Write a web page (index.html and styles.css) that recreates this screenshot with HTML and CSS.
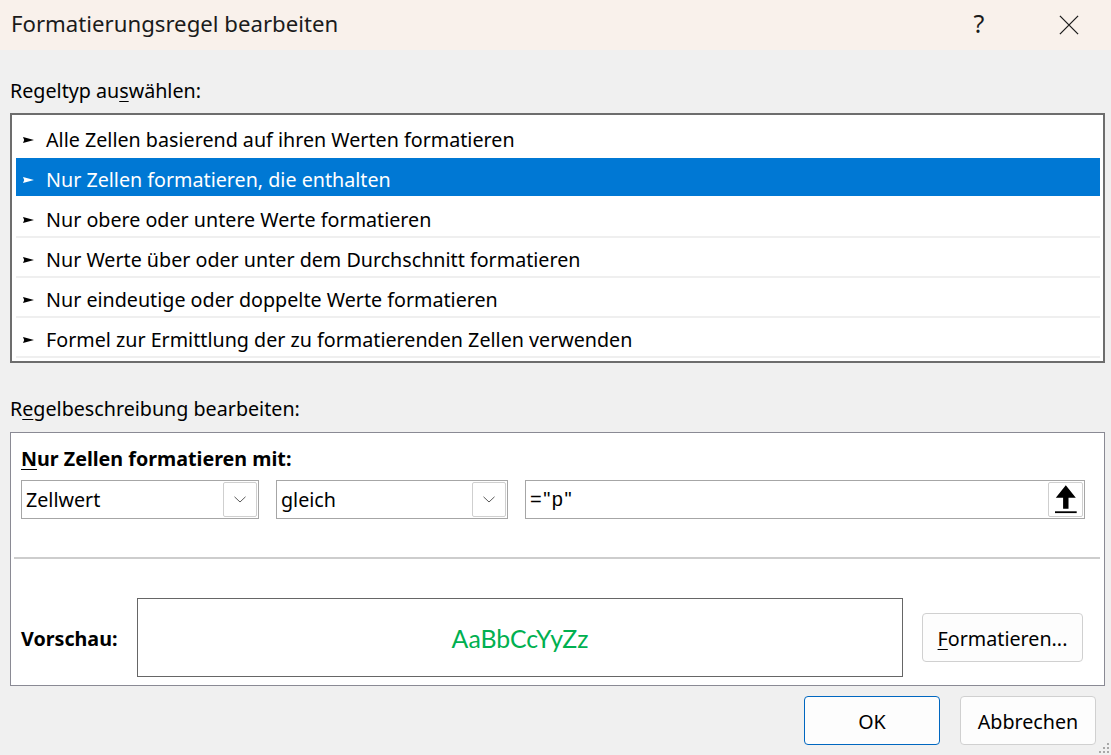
FILE: index.html
```html
<!DOCTYPE html>
<html lang="de">
<head>
<meta charset="utf-8">
<title>Formatierungsregel bearbeiten</title>
<link rel="stylesheet" href="styles.css">
</head>
<body>
<div class="titlebar">
  <div class="title">Formatierungsregel bearbeiten</div>
  <div class="tb-btns">
    <div class="tb-btn help">?</div>
    <div class="tb-btn close">
      <svg width="22" height="22" viewBox="0 0 22 22"><path d="M1 1 L21 21 M21 1 L1 21" stroke="#1b1b1b" stroke-width="1.4" fill="none"/></svg>
    </div>
  </div>
</div>
<div class="main">
  <div class="lbl first">Regeltyp au<u>s</u>wählen:</div>
  <div class="listbox">
    <div class="item"><svg class="ptr" width="11" height="6" viewBox="0 0 11 6"><path d="M0 0 L11 3 L0 6 L1.2 3 Z"/></svg><span>Alle Zellen basierend auf ihren Werten formatieren</span></div>
    <div class="item selected"><svg class="ptr" width="11" height="6" viewBox="0 0 11 6"><path d="M0 0 L11 3 L0 6 L1.2 3 Z"/></svg><span>Nur Zellen formatieren, die enthalten</span></div>
    <div class="item sep"><svg class="ptr" width="11" height="6" viewBox="0 0 11 6"><path d="M0 0 L11 3 L0 6 L1.2 3 Z"/></svg><span>Nur obere oder untere Werte formatieren</span></div>
    <div class="item sep"><svg class="ptr" width="11" height="6" viewBox="0 0 11 6"><path d="M0 0 L11 3 L0 6 L1.2 3 Z"/></svg><span>Nur Werte über oder unter dem Durchschnitt formatieren</span></div>
    <div class="item sep"><svg class="ptr" width="11" height="6" viewBox="0 0 11 6"><path d="M0 0 L11 3 L0 6 L1.2 3 Z"/></svg><span>Nur eindeutige oder doppelte Werte formatieren</span></div>
    <div class="item sep"><svg class="ptr" width="11" height="6" viewBox="0 0 11 6"><path d="M0 0 L11 3 L0 6 L1.2 3 Z"/></svg><span>Formel zur Ermittlung der zu formatierenden Zellen verwenden</span></div>
  </div>
  <div class="lbl second">R<u>e</u>gelbeschreibung bearbeiten:</div>
  <div class="panel">
    <div class="bold-lbl"><u>N</u>ur Zellen formatieren mit:</div>
    <div class="row">
      <div class="combo dd1">
        <span class="combo-text">Zellwert</span>
        <span class="combo-btn"><svg width="12" height="7" viewBox="0 0 12 7"><path d="M0.5 0.8 L6 6 L11.5 0.8" stroke="#5a5a5a" stroke-width="1" fill="none"/></svg></span>
      </div>
      <div class="combo dd2">
        <span class="combo-text">gleich</span>
        <span class="combo-btn"><svg width="12" height="7" viewBox="0 0 12 7"><path d="M0.5 0.8 L6 6 L11.5 0.8" stroke="#5a5a5a" stroke-width="1" fill="none"/></svg></span>
      </div>
      <div class="combo field">
        <span class="field-text">="p"</span>
        <span class="combo-btn up-btn"><svg width="33" height="33" viewBox="0 0 33 33"><path d="M16.8 2.3 L26.8 14.7 L19.5 14.7 L19.5 25.7 L14.1 25.7 L14.1 14.7 L6.8 14.7 Z" fill="#000"/><rect x="6" y="28.3" width="21.7" height="1.8" fill="#000"/></svg></span>
      </div>
    </div>
    <div class="divider"></div>
    <div class="preview-row">
      <div class="vlabel">Vorschau:</div>
      <div class="preview">AaBbCcYyZz</div>
      <div class="btn fmt"><u>F</u>ormatieren...</div>
    </div>
  </div>
  <div class="buttons">
    <div class="btn ok">OK</div>
    <div class="btn">Abbrechen</div>
  </div>
</div>
<svg class="grip" width="14" height="14" viewBox="0 0 14 14">
  <rect x="10" y="2" width="2" height="2" fill="#a8a8a8"/>
  <rect x="6" y="6" width="2" height="2" fill="#a8a8a8"/>
  <rect x="10" y="6" width="2" height="2" fill="#a8a8a8"/>
  <rect x="2" y="10" width="2" height="2" fill="#a8a8a8"/>
  <rect x="6" y="10" width="2" height="2" fill="#a8a8a8"/>
  <rect x="10" y="10" width="2" height="2" fill="#a8a8a8"/>
</svg>
</body>
</html>
```
FILE: styles.css
```css
html, body {
  margin: 0;
  padding: 0;
}
body {
  width: 1111px;
  height: 755px;
  overflow: hidden;
  position: relative;
  background: #f0f0f0;
  font-family: "Noto Sans", "Open Sans", sans-serif;
  font-size: 19.7px;
  color: #000;
}
u {
  text-decoration-thickness: 1px;
  text-underline-offset: 3px;
}
.titlebar {
  height: 50px;
  background: #f9f1eb;
  display: flex;
  align-items: center;
}
.title {
  flex: 1;
  padding-left: 11px;
  font-size: 22.2px;
  line-height: 48px;
  height: 50px;
  color: #1b1b1b;
}
.tb-btns {
  display: flex;
  gap: 46px;
  margin-right: 19px;
}
.tb-btn {
  width: 46px;
  height: 50px;
  display: flex;
  align-items: center;
  justify-content: center;
}
.help {
  font-size: 25px;
  color: #1b1b1b;
  padding-bottom: 4px;
  padding-left: 4px;
  box-sizing: border-box;
}
.close svg {
  display: block;
  width: 20px;
  height: 20px;
}
.main {
  padding: 0 6px 0 10px;
}
.lbl {
  height: 24px;
  line-height: 24px;
  margin-bottom: 10px;
}
.lbl.first {
  margin-top: 29px;
}
.lbl.second {
  margin-top: 34px;
  margin-bottom: 11px;
}
.listbox {
  box-sizing: border-box;
  width: 1095px;
  height: 250px;
  border: 2px solid #6d6d6d;
  background: #fff;
  padding: 3px 3px 3px 4px;
}
.item {
  height: 33px;
  padding-top: 5px;
  line-height: 33px;
  padding-left: 7px;
  display: flex;
  align-items: center;
  border-bottom: 2px solid transparent;
  white-space: nowrap;
}
.item.sep {
  border-bottom-color: #efefef;
}
.item .ptr {
  flex: none;
  margin-right: 12px;
  fill: #000;
}
.item.selected {
  background: #0078d4;
  color: #fff;
  border-bottom-color: #fff;
}
.item.selected .ptr {
  fill: #fff;
}
.panel {
  box-sizing: border-box;
  width: 1095px;
  height: 254px;
  border: 1px solid #8a8a94;
  background: #fff;
  padding: 14px 10px 8px 10px;
}
.bold-lbl {
  font-weight: 700;
  height: 24px;
  line-height: 24px;
}
.row {
  margin-top: 9px;
  display: flex;
  gap: 17px;
}
.combo {
  box-sizing: border-box;
  height: 39px;
  border: 1px solid #a6a6a6;
  padding: 1px 1px 1px 1px;
  display: flex;
  background: #fff;
}
.dd1 { width: 238px; }
.dd2 { width: 232px; }
.field { width: 560px; padding-right: 1px; }
.combo-text {
  flex: 1;
  padding-left: 3px;
  line-height: 35px;
  white-space: nowrap;
}
.field-text {
  flex: 1;
  padding-left: 3px;
  line-height: 35px;
  font-family: "Liberation Sans", Arial, sans-serif;
  font-size: 20px;
  letter-spacing: 1.5px;
}
.combo-btn {
  box-sizing: border-box;
  width: 34px;
  height: 35px;
  border: 1px solid #cfcfcf;
  border-radius: 2px;
  display: flex;
  align-items: center;
  justify-content: center;
  background: #fff;
}
.combo-btn svg {
  display: block;
}
.up-btn {
  width: 35px;
  align-items: flex-start;
  justify-content: flex-start;
}
.divider {
  height: 2px;
  background: #cdcdcd;
  margin: 38px -6px 0 -7px;
}
.preview-row {
  margin-top: 39px;
  display: flex;
  align-items: center;
  height: 79px;
}
.vlabel {
  width: 116px;
  font-weight: 700;
  line-height: 24px;
  padding-top: 2px;
}
.preview {
  box-sizing: border-box;
  width: 766px;
  height: 79px;
  border: 1px solid #666;
  display: flex;
  align-items: center;
  justify-content: center;
  font-family: Lato, "Noto Sans", sans-serif;
  font-size: 24.8px;
  color: #00b050;
  padding-top: 1px;
}
.btn {
  box-sizing: border-box;
  height: 49px;
  border: 1px solid #d0d0d0;
  border-radius: 4px;
  background: #fdfdfd;
  display: flex;
  justify-content: center;
  line-height: 45px;
  padding-top: 2px;
  white-space: nowrap;
}
.fmt {
  width: 161px;
  margin-left: 19px;
}
.buttons {
  margin-top: 10px;
  margin-right: 9px;
  display: flex;
  justify-content: flex-end;
  gap: 20px;
}
.buttons .btn {
  width: 136px;
}
.btn.ok {
  border-color: #0067c0;
}
.grip {
  position: absolute;
  right: 0;
  bottom: 0;
}
```
